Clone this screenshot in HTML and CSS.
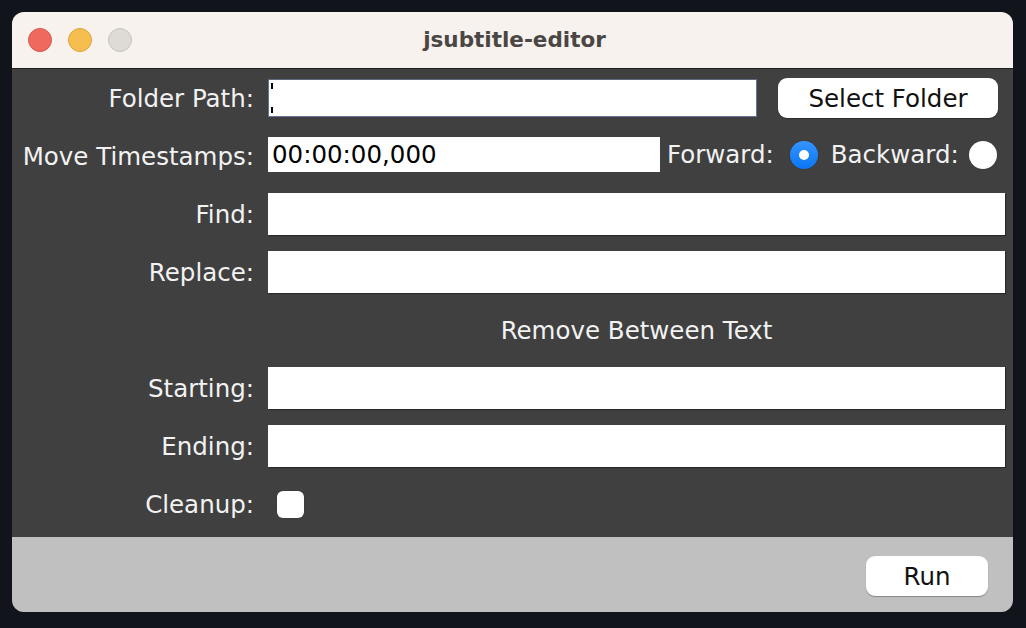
FILE: index.html
```html
<!DOCTYPE html>
<html>
<head>
<meta charset="utf-8">
<link rel="stylesheet" href="styles.css">
</head>
<body>
<div class="window">
  <div class="titlebar">
    <div class="lights">
      <span class="light red"></span>
      <span class="light yellow"></span>
      <span class="light gray"></span>
    </div>
    <div class="title">jsubtitle-editor</div>
  </div>
  <div class="content">
    <div class="row">
      <label class="lbl">Folder Path:</label>
      <div class="cell folder">
        <div class="field focused"><span class="caret top"></span><span class="caret bottom"></span></div>
        <button class="btn select">Select Folder</button>
      </div>
    </div>
    <div class="row">
      <label class="lbl">Move Timestamps:</label>
      <div class="cell stamps">
        <div class="field time">00:00:00,000</div>
        <span class="opt">Forward:</span>
        <span class="radio on"></span>
        <span class="opt">Backward:</span>
        <span class="radio off"></span>
      </div>
    </div>
    <div class="row">
      <label class="lbl">Find:</label>
      <div class="cell"><div class="field big"></div></div>
    </div>
    <div class="row">
      <label class="lbl">Replace:</label>
      <div class="cell"><div class="field big"></div></div>
    </div>
    <div class="row">
      <span></span>
      <div class="cell heading">Remove Between Text</div>
    </div>
    <div class="row">
      <label class="lbl">Starting:</label>
      <div class="cell"><div class="field big"></div></div>
    </div>
    <div class="row">
      <label class="lbl">Ending:</label>
      <div class="cell"><div class="field big"></div></div>
    </div>
    <div class="row">
      <label class="lbl">Cleanup:</label>
      <div class="cell"><span class="check"></span></div>
    </div>
  </div>
  <div class="footer">
    <button class="btn run">Run</button>
  </div>
</div>
</body>
</html>
```
FILE: styles.css
```css
html, body {
  margin: 0;
  padding: 0;
  background: #11141a;
  width: 1026px;
  height: 628px;
  overflow: hidden;
}
body {
  padding: 12px 0 0 12px;
  box-sizing: border-box;
  font-family: "DejaVu Sans", "Noto Sans", sans-serif;
}
.window {
  width: 1001px;
  height: 600px;
  border-radius: 12px;
  overflow: hidden;
  display: flex;
  flex-direction: column;
  background: #404040;
}
.titlebar {
  height: 56px;
  background: #f7f2ee;
  border-bottom: 1px solid #1e1e1e;
  position: relative;
  display: flex;
  align-items: center;
  justify-content: center;
  flex-shrink: 0;
}
.lights {
  position: absolute;
  left: 16px;
  top: 16px;
  display: flex;
  gap: 16px;
}
.light {
  width: 24px;
  height: 24px;
  border-radius: 50%;
  box-sizing: border-box;
}
.light.red { background: #ee6a5f; border: 1px solid #d8574d; }
.light.yellow { background: #f5bf4f; border: 1px solid #dca63c; }
.light.gray { background: #dedad6; border: 1px solid #c8c4c0; }
.title {
  font-family: "DejaVu Sans", sans-serif;
  font-weight: 700;
  font-size: 21.5px;
  color: #4a4644;
  margin-top: -2px;
  margin-left: 4px;
}
.content {
  height: 468px;
  flex-shrink: 0;
  background: #404040;
  padding-right: 8px;
}
.row {
  height: 58px;
  display: grid;
  grid-template-columns: 242px 1fr;
  column-gap: 14px;
  align-items: center;
}
.lbl {
  text-align: right;
  color: #f2f2f2;
  font-size: 24.5px;
  white-space: nowrap;
}
.cell {
  display: flex;
  align-items: center;
  height: 100%;
}
.field {
  background: #ffffff;
  box-sizing: border-box;
  position: relative;
}
.field.big {
  width: 100%;
  height: 42px;
  box-shadow: 1px 1px 1px rgba(0,0,0,0.35);
}
.folder .field {
  width: 489px;
  height: 38px;
  border: 1px solid #647694;
  border-top-color: #5d6a7e;
}
.caret {
  position: absolute;
  left: 2px;
  width: 2px;
  height: 6px;
  background: #000;
}
.caret.top { top: 3px; }
.caret.bottom { bottom: 3px; }
.btn {
  background: #ffffff;
  border: none;
  border-radius: 9px;
  font-family: "DejaVu Sans", sans-serif;
  font-size: 24.5px;
  color: #111;
  box-shadow: 0 1px 1px rgba(0,0,0,0.3);
  padding: 0;
}
.btn.select {
  margin-left: 21px;
  width: 220px;
  height: 40px;
}
.field.time {
  width: 392px;
  height: 35px;
  font-size: 24.5px;
  color: #000;
  padding-left: 4px;
  line-height: 35px;
  margin-top: -3px;
}
.stamps .opt {
  color: #f2f2f2;
  font-size: 24.5px;
  margin-top: -3px;
  white-space: nowrap;
}
.stamps .field + .opt { margin-left: 7px; }
.radio {
  width: 28px;
  height: 28px;
  border-radius: 50%;
  background: #ffffff;
  box-sizing: border-box;
  margin-top: -3px;
  position: relative;
  flex-shrink: 0;
  box-shadow: 0 0 1px rgba(0,0,0,0.4);
}
.radio.on {
  background: linear-gradient(#3594ff, #0a76f5);
  margin-left: 16px;
  margin-right: 13px;
}
.radio.on::after {
  content: "";
  position: absolute;
  left: 9px;
  top: 9px;
  width: 10px;
  height: 10px;
  border-radius: 50%;
  background: #fff;
}
.radio.off { margin-left: 10px; }
.heading {
  justify-content: center;
  color: #f2f2f2;
  font-size: 24.5px;
}
.check {
  width: 27px;
  height: 27px;
  border-radius: 6px;
  background: #fff;
  margin-left: 9px;
  box-shadow: 0 0 1px rgba(0,0,0,0.4);
}
.footer {
  flex: 1;
  background: #c0c0c0;
  display: flex;
  justify-content: flex-end;
  align-items: center;
  padding-right: 25px;
}
.btn.run {
  width: 122px;
  height: 40px;
  margin-top: 3px;
}
```
